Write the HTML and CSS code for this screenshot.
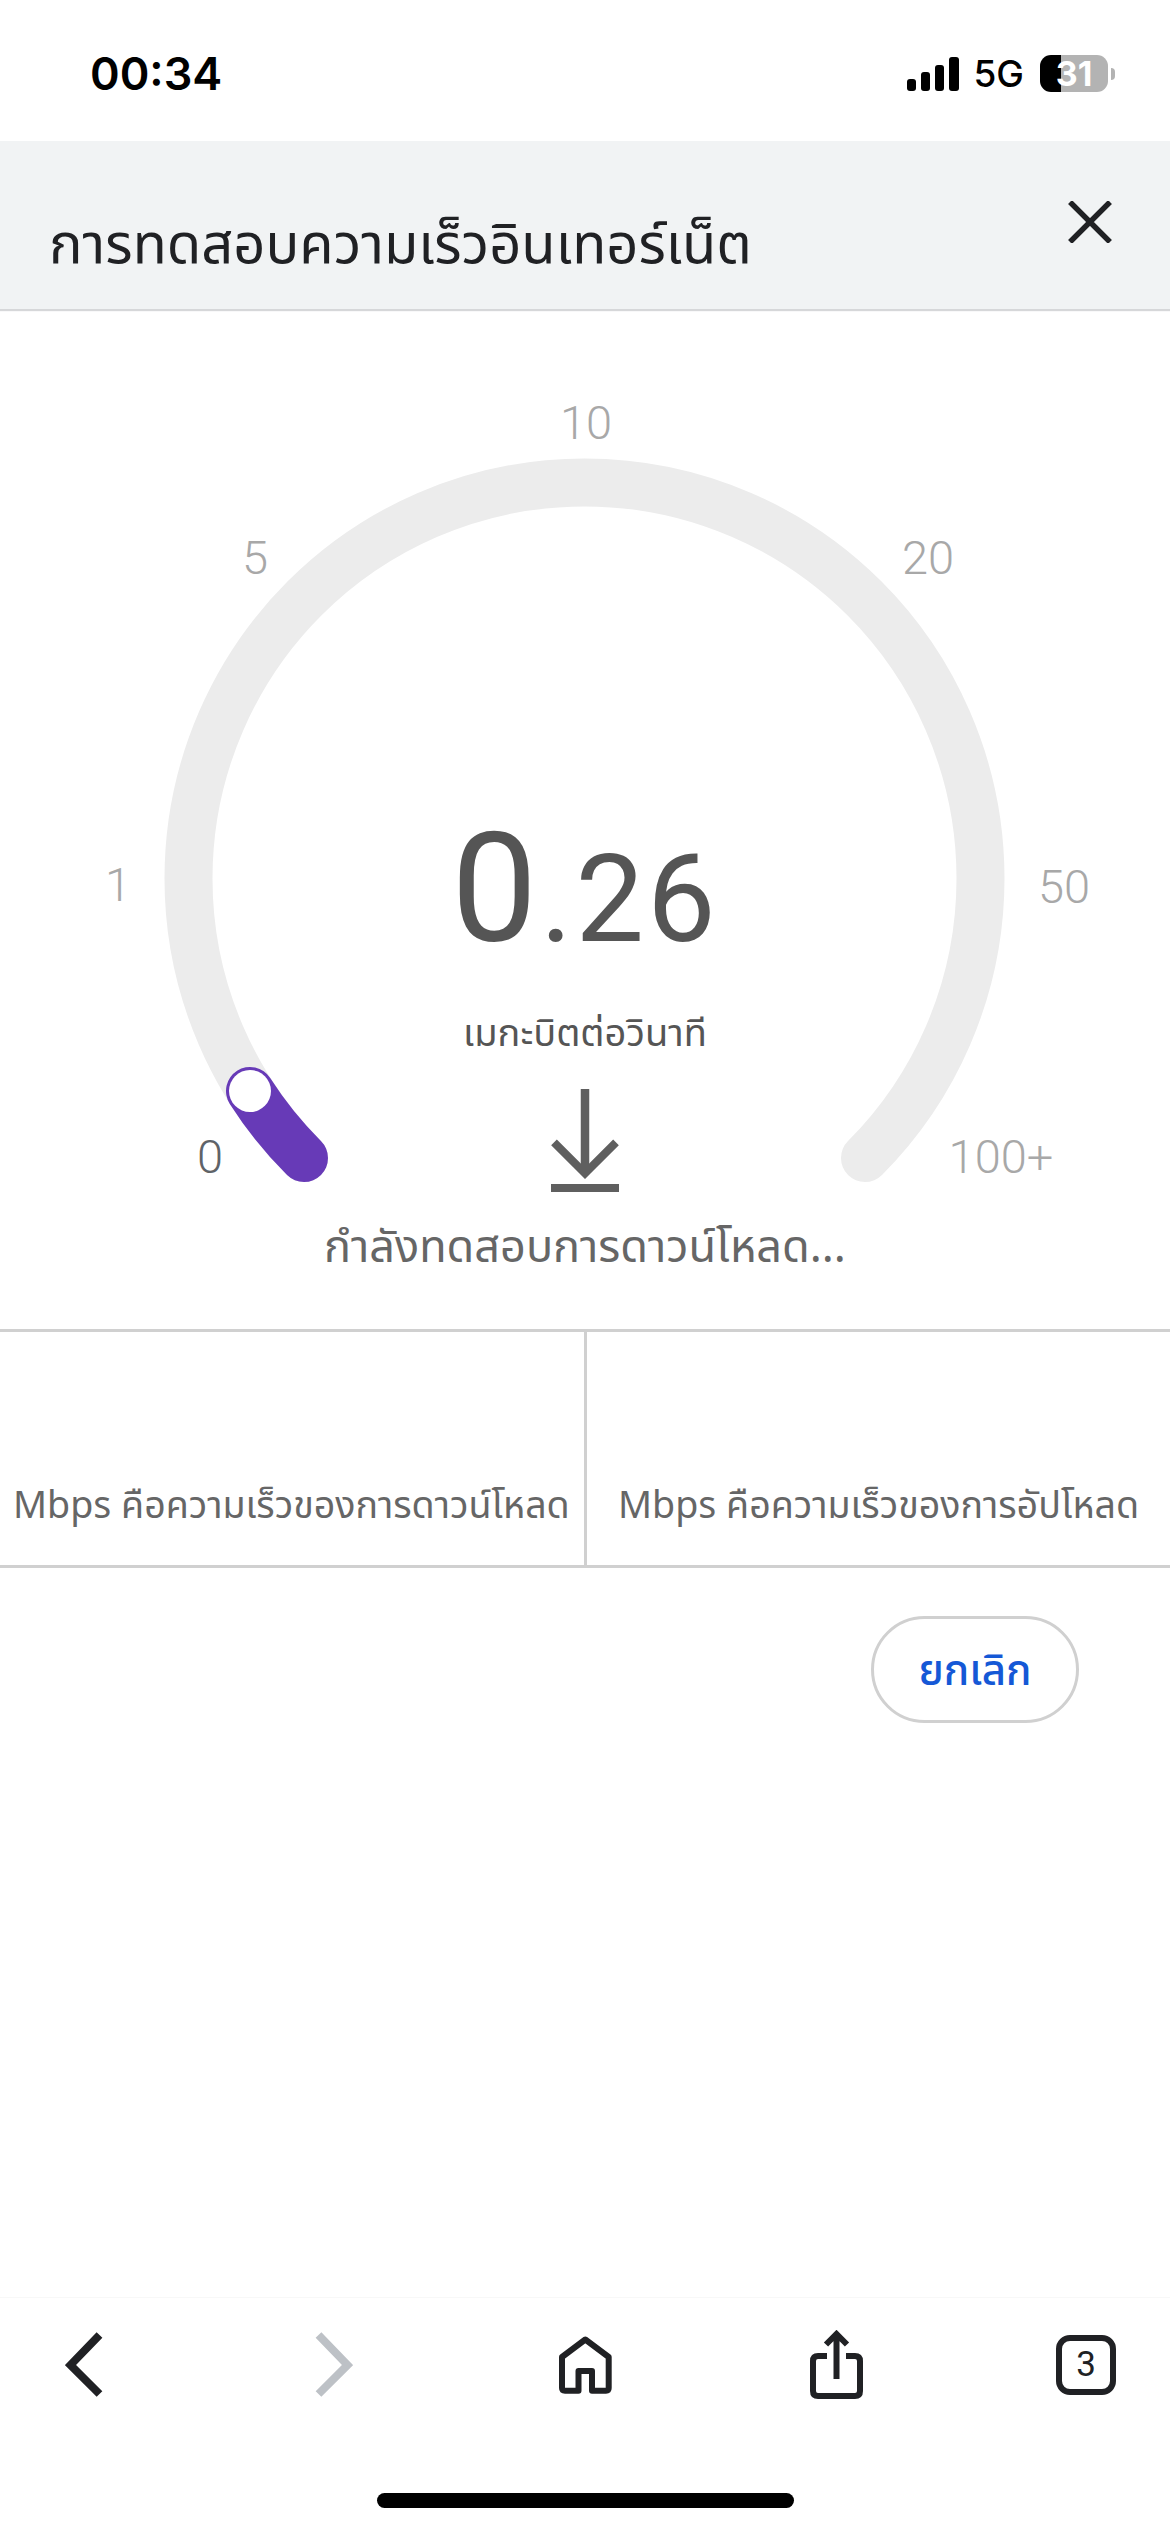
FILE: index.html
```html
<!DOCTYPE html>
<html lang="th">
<head>
<meta charset="utf-8">
<title>การทดสอบความเร็วอินเทอร์เน็ต</title>
<link rel="stylesheet" href="styles.css">
</head>
<body>
<div class="phone">
  <div class="status-bar">
    <span class="clock">00:34</span>
    <div class="status-icons">
      <svg class="signal" width="52" height="34" viewBox="0 0 52 34"><rect x="0" y="22" width="9" height="12" rx="3"/><rect x="14" y="15" width="9" height="19" rx="3"/><rect x="28" y="8" width="9" height="26" rx="3"/><rect x="42" y="0" width="10" height="34" rx="3"/></svg>
      <span class="network">5G</span>
      <div class="battery"><span class="battery-level">31</span></div>
      <span class="battery-nub"></span>
    </div>
  </div>

  <header class="sheet-header">
    <h1 class="sheet-title">การทดสอบความเร็วอินเทอร์เน็ต</h1>
    <svg class="close" width="44" height="42" viewBox="0 0 44 42"><path d="M2 1 42 41M42 1 2 41" fill="none" stroke="#202124" stroke-width="5.5"/></svg>
  </header>

  <section class="gauge">
    <svg class="dial" width="1170" height="1010" viewBox="0 0 1170 1010">
      <path class="track" d="M304 849A396 396 0 1 1 865 849"/>
      <path class="progress" d="M304 849A396 396 0 0 1 250 782"/>
      <circle class="knob" cx="250" cy="782" r="21"/>
      <text class="tick" x="586" y="130">10</text>
      <text class="tick" x="255" y="265">5</text>
      <text class="tick" x="928" y="265">20</text>
      <text class="tick" x="118" y="592">1</text>
      <text class="tick" x="1064" y="594">50</text>
      <text class="tick tick-active" x="210" y="864">0</text>
      <text class="tick" x="1001" y="864">100+</text>
    </svg>
    <div class="reading">
      <div class="speed"><span class="speed-int">0</span><span class="speed-frac">.26</span></div>
      <div class="unit">เมกะบิตต่อวินาที</div>
      <svg class="direction" width="68" height="103" viewBox="0 0 68 103"><path d="M34 0V84" stroke-width="8.5"/><path d="M3 53.4 34 84.4 65 53.4" stroke-width="8"/><path d="M0 99H68" stroke-width="8"/></svg>
      <div class="phase">กำลังทดสอบการดาวน์โหลด...</div>
    </div>
  </section>

  <section class="results">
    <div class="result">Mbps คือความเร็วของการดาวน์โหลด</div>
    <div class="result">Mbps คือความเร็วของการอัปโหลด</div>
  </section>

  <div class="actions"><button class="cancel">ยกเลิก</button></div>

  <nav class="toolbar">
    <svg width="38" height="66" viewBox="0 0 38 66"><path d="M34.5 3 5.5 33 34.5 62" fill="none" stroke="#202124" stroke-width="8"/></svg>
    <svg width="38" height="66" viewBox="0 0 38 66"><path d="M3.5 3 32.5 33 3.5 62" fill="none" stroke="#bdc1c6" stroke-width="8"/></svg>
    <svg width="53" height="58" viewBox="0 0 53 58"><path d="M26.3 3.5 49.7 21V52Q49.7 54.7 47 54.7H33V35H19.5V54.7H6Q3 54.7 3 52V21Z" fill="none" stroke="#202124" stroke-width="6" stroke-linejoin="round"/></svg>
    <svg width="53" height="69" viewBox="0 0 53 69"><path d="M17 26H8Q3 26 3 31V61Q3 66 8 66H45Q50 66 50 61V31Q50 26 45 26H36" fill="none" stroke="#202124" stroke-width="6"/><path d="M26.5 49V4M16 14.5 26.5 4 37 14.5" fill="none" stroke="#202124" stroke-width="6"/></svg>
    <div class="tabs">3</div>
  </nav>
  <div class="home-indicator"></div>
</div>
</body>
</html>
```
FILE: styles.css
```css
* { box-sizing: border-box; }
html, body { margin: 0; padding: 0; background: #fff; }
body { font-family: "Noto Sans Thai", "Noto Sans Thai UI", "Sarabun", "Loma", "Tlwg Typo", "Garuda", Roboto, "Liberation Sans", sans-serif; }
.phone { position: relative; width: 1170px; height: 2532px; display: flex; flex-direction: column; overflow: hidden; }

.status-bar { height: 141px; display: flex; justify-content: space-between; align-items: flex-start; padding: 51px 55px 0 90px; }
.clock { font: 600 45px/46px Inter, sans-serif; color: #000; }
.status-icons { display: flex; align-items: center; padding-top: 4px; }
.signal { fill: #000; margin-right: 14px; }
.network { font: 500 37px/36px Inter, sans-serif; color: #000; margin-right: 16px; }
.battery { width: 68px; height: 37px; border-radius: 11px; background: linear-gradient(to right, #000 31%, #b3b3b3 31%); text-align: center; }
.battery-level { font: 700 34px/37px Inter, sans-serif; color: #fff; }
.battery-nub { width: 4px; height: 12px; margin-left: 3px; background: #b3b3b3; border-radius: 0 4px 4px 0; }

.sheet-header { height: 168px; background: #f1f3f4; box-shadow: 0 2px 1px #d6d7d9; display: flex; justify-content: space-between; align-items: flex-start; padding: 60px 58px 0 49px; }
.sheet-title { margin: 10px 0 0; font-size: 56px; line-height: 70px; font-weight: 400; color: #202124; }

.gauge { position: relative; height: 1020px; }
.dial { display: block; }
.track, .progress { fill: none; stroke-width: 48; stroke-linecap: round; }
.track { stroke: #ececec; }
.progress { stroke: #673ab7; }
.knob { fill: #fff; }
.tick { font: 300 47px Roboto, sans-serif; fill: #a8a8a8; text-anchor: middle; }
.tick-active { fill: #5f6368; }

.reading { position: absolute; left: 0; right: 0; top: 500px; display: flex; flex-direction: column; align-items: center; color: #5f6368; }
.speed { font-family: Roboto, sans-serif; color: #555; line-height: 160px; height: 160px; font-weight: 400; letter-spacing: 3px; }
.speed-int { font-size: 153px; }
.speed-frac { font-size: 122px; }
.unit { font-size: 38px; line-height: 50px; color: #555; margin-top: 41px; }
.direction { fill: none; stroke: #5f5f5f; margin-top: 29px; }
.phase { font-size: 45px; line-height: 60px; color: #666; margin-top: 26px; }

.results { height: 239px; border-top: 3px solid #d0d0d0; border-bottom: 3px solid #d0d0d0; display: grid; grid-template-columns: 584px 1fr; }
.result { font-size: 37.6px; line-height: 50px; color: #666; padding: 150px 0 0 13px; white-space: nowrap; }
.result + .result { border-left: 3px solid #d0d0d0; padding-left: 31px; }

.actions { display: flex; justify-content: flex-end; padding: 48px 91px 0 0; }
.cancel { width: 208px; height: 107px; padding: 4px 0 0; border: 3px solid #d0d0d0; border-radius: 54px; background: #fff; color: #1558d6; font: inherit; font-size: 42px; font-weight: 500; }

.toolbar { margin-top: 574px; height: 196px; border-top: 1px solid #f8f8f8; display: grid; grid-template-columns: 168px 332px 170px 332px 1fr; grid-template-rows: 133px; justify-items: center; align-items: center; }
.tabs { width: 60px; height: 60px; border: 6px solid #202124; border-radius: 14px; font: 400 35px/48px Roboto, sans-serif; text-align: center; color: #202124; }
.home-indicator { position: absolute; left: 377px; top: 2493px; width: 417px; height: 15px; background: #000; border-radius: 8px; }
```
